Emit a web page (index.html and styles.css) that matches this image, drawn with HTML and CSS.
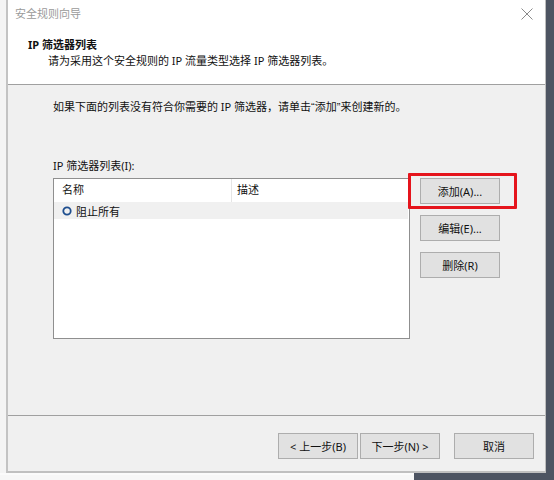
FILE: index.html
```html
<!DOCTYPE html>
<html lang="zh-CN">
<head>
<meta charset="utf-8">
<title>安全规则向导</title>
<link rel="stylesheet" href="styles.css">
</head>
<body>
<div class="desk">
  <div class="top">
    <div class="strip-left"></div>
    <div class="window">
      <div class="header">
        <div class="titlebar">
          <span class="wtitle">安全规则向导</span>
          <svg class="close" width="12" height="12" viewBox="0 0 12 12"><path d="M0.5 0.5 L11.5 11.5 M11.5 0.5 L0.5 11.5" stroke="#8a8a8a" stroke-width="1" fill="none"/></svg>
        </div>
        <div class="head-title">IP 筛选器列表</div>
        <div class="head-sub">请为采用这个安全规则的 IP 流量类型选择 IP 筛选器列表。</div>
      </div>
      <div class="body">
        <div class="intro">如果下面的列表没有符合你需要的 IP 筛选器，请单击<span class="q">“</span>添加<span class="q">”</span>来创建新的。</div>
        <div class="picker">
          <div class="label">IP 筛选器列表(I):</div>
          <div class="list">
            <div class="list-head">
              <div class="col col-name">名称</div>
              <div class="col col-desc">描述</div>
            </div>
            <div class="row">
              <svg class="radio" width="10" height="10" viewBox="0 0 10 10"><circle cx="5" cy="5" r="3.7" stroke="#1f4f8f" stroke-width="1.8" fill="none"/></svg>
              <span>阻止所有</span>
            </div>
          </div>
          <div class="side">
            <div class="highlight"><button class="btn">添加(A)...</button></div>
            <button class="btn">编辑(E)...</button>
            <button class="btn">删除(R)</button>
          </div>
        </div>
      </div>
      <div class="footer">
        <button class="btn">&lt; 上一步(B)</button>
        <button class="btn btn-next">下一步(N) &gt;</button>
        <button class="btn btn-cancel">取消</button>
      </div>
    </div>
    <div class="strip-right"></div>
  </div>
  <div class="bottom">
    <div class="bottom-light"></div>
    <div class="bottom-dark"></div>
  </div>
</div>
</body>
</html>
```
FILE: styles.css
```css
* { box-sizing: border-box; }
html, body { margin: 0; padding: 0; }
body {
  width: 554px;
  height: 480px;
  overflow: hidden;
  font-family: "Noto Sans", "Noto Sans CJK SC", sans-serif;
  font-size: 11px;
  color: #111;
  background: #4d5462;
}
.desk { display: flex; flex-direction: column; width: 554px; height: 480px; }
.top { display: flex; height: 473px; }
.strip-left { width: 6px; background: #f4f4f4; }
.strip-right { flex: 1; background: #4d5462; }
.bottom { display: flex; flex: 1; }
.bottom-light { width: 414px; background: #f7f7f7; border-top: 2px solid #fbfbfb; }
.bottom-dark { flex: 1; background: #4d5462; }

.window {
  width: 540px;
  display: flex;
  flex-direction: column;
  background: #f0f0f0;
  border-left: 2px solid #c3c3c3;
  border-right: 1px solid #bdbdbd;
  border-bottom: 2px solid #c0c0c0;
}
.header {
  height: 85px;
  background: #fff;
  border-bottom: 1px solid #a0a0a0;
}
.titlebar {
  height: 28px;
  display: flex;
  align-items: center;
  justify-content: space-between;
  padding: 0 12px 0 7px;
}
.wtitle { color: #9a9a9a; font-size: 11px; line-height: 28px; }
.close { display: block; margin-top: -1px; }
.head-title {
  margin-top: 9px;
  padding-left: 20px;
  font-weight: bold;
  line-height: 16px;
}
.head-sub {
  padding-left: 40px;
  line-height: 16px;
}
.body {
  height: 330px;
  padding: 14px 0 0 45px;
}
.intro { line-height: 16px; }
.q { font-family: "Liberation Sans", sans-serif; }
.picker {
  margin-top: 43px;
  display: grid;
  grid-template-columns: 357px 80px;
  column-gap: 10px;
  row-gap: 4px;
}
.label { line-height: 16px; grid-column: 1 / 3; }
.list {
  height: 161px;
  background: #fff;
  border: 1px solid #8f8f8f;
}
.list-head { display: flex; height: 23px; align-items: stretch; }
.col { line-height: 22px; padding-left: 8px; }
.col-name { width: 178px; border-right: 1px solid #e5e5e5; }
.col-desc { flex: 1; padding-left: 5px; }
.row {
  display: flex;
  align-items: center;
  height: 17px;
  margin-right: 1px;
  background: #f0f0f0;
  padding-left: 8px;
}
.radio { display: block; margin-right: 4px; }
.side { display: flex; flex-direction: column; gap: 11px; }
.highlight { position: relative; }
.highlight::after {
  content: "";
  position: absolute;
  left: -12px;
  right: -17px;
  top: -5px;
  bottom: -5px;
  border: 3px solid #e5141c;
  border-radius: 1px;
}
.btn {
  display: block;
  width: 80px;
  height: 26px;
  padding: 0;
  margin: 0;
  font: inherit;
  color: #111;
  background: #e1e1e1;
  border: 1px solid #adadad;
  border-radius: 0;
}
.footer {
  flex: 1;
  display: flex;
  justify-content: flex-end;
  align-items: flex-start;
  padding: 17px 11px 0 0;
  border-top: 1px solid #a0a0a0;
}
.btn-next { margin-left: 2px; }
.btn-cancel { margin-left: 14px; }
```
